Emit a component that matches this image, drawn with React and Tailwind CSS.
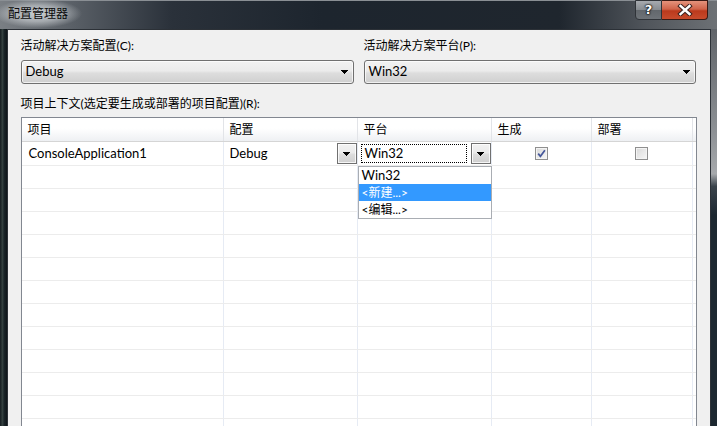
import React from "react";

const COLS = "grid-cols-[202px_134px_134px_100px_101px_1fr]";
const BTN_BG = "bg-[linear-gradient(#f2f2f2,#ebebeb_45%,#dddddd_55%,#cfcfcf)]";

function Arrow() {
    return (
        <svg width="7" height="4" viewBox="0 0 7 4" shapeRendering="crispEdges">
            <path d="M0 0H7V1H6V2H5V3H4V4H3V3H2V2H1V1H0Z" fill="#000" />
        </svg>
    );
}

function Combo({ value }) {
    return (
        <div className={`flex h-[24px] items-center justify-between rounded-[3px] border border-[#707070] ${BTN_BG} pl-[4px] pr-[5px] shadow-[inset_0_0_0_1px_rgba(255,255,255,0.7)]`}>
            <span className="text-[13px]">{value}</span>
            <Arrow />
        </div>
    );
}

function DropButton() {
    return (
        <div className={`flex h-[21px] w-[20px] shrink-0 items-center justify-center border border-[#707070] ${BTN_BG} shadow-[inset_0_0_0_1px_rgba(255,255,255,0.8)]`}>
            <Arrow />
        </div>
    );
}

function Check({ checked }) {
    return (
        <div className="flex h-[13px] w-[13px] items-center justify-center border border-[#8f8f8f] bg-[linear-gradient(135deg,#d9d9d9,#f7f7f7)] shadow-[inset_0_0_0_1px_#f4f4f4]">
            {checked && (
                <svg width="9" height="9" viewBox="0 0 9 9">
                    <path d="M1.2 4.6L3.4 7.3L7.9 1.2" stroke="#45579a" strokeWidth="1.7" fill="none" />
                </svg>
            )}
        </div>
    );
}

function App() {
    const headers = ["项目", "配置", "平台", "生成", "部署"];
    const emptyRows = Array.from({ length: 12 });

    return (
        <div className="flex h-[426px] w-[717px] flex-col overflow-hidden bg-[#1d252d] font-['Lato','Noto_Sans_CJK_SC',sans-serif] text-[12px] text-black">
            {/* Title bar */}
            <div className="flex h-[29px] shrink-0 items-start justify-between border-t border-[#8a8f94] bg-[linear-gradient(90deg,#7a7f84_0%,#5a6067_10%,#2a313a_24%,#1d252e_45%,#1f262e_78%,#50555b_90%,#6d7175_100%)]">
                <div className="ml-[-6px] mt-[-2px] bg-[radial-gradient(closest-side,rgba(225,229,232,0.8),rgba(225,229,232,0.5)_55%,rgba(225,229,232,0)_100%)] px-[14px] pb-[6px] pt-[7px]">
                    <span className="block leading-[16px] text-[#0a0a0a]">配置管理器</span>
                </div>
                <div className="mr-[9px] flex -mt-[1px]">
                    <div className="flex h-[20px] w-[27px] items-center justify-center rounded-bl-[4px] border border-[#2f3338] bg-[linear-gradient(#a7abb0,#868b90_50%,#62676c_51%,#6e7378)] font-['DejaVu_Sans',sans-serif] text-[13px] font-bold text-white [text-shadow:0_0_1px_#000,0_0_2px_#000,0_0_2px_#000]">
                        ?
                    </div>
                    <div className="flex h-[20px] w-[46px] items-center justify-center rounded-br-[4px] border border-l-0 border-[#3a1a14] bg-[linear-gradient(#e4937c,#d0644a_45%,#bb3a1d_55%,#c74b2c)]">
                        <svg width="16" height="12" viewBox="0 0 16 12">
                            <path d="M3.5 2L12.5 10M12.5 2L3.5 10" stroke="#3a2320" strokeWidth="4.4" strokeLinecap="square" fill="none" />
                            <path d="M3.5 2L12.5 10M12.5 2L3.5 10" stroke="#fff" strokeWidth="2.4" strokeLinecap="square" fill="none" />
                        </svg>
                    </div>
                </div>
            </div>

            {/* Body with frame sides */}
            <div className="flex flex-1">
                <div className="w-[7px] bg-[linear-gradient(90deg,#141b1f,#34403f_35%,#1a2428_60%,#0f1519)]" />
                <div className="flex-1 border-l border-t border-r border-[#2c3137] bg-[#f0f0f0] px-[13px] pt-[8px]">
                    <div className="flex gap-[10px]">
                        <div className="w-[333px]">
                            <div className="h-[16px] leading-[16px]">活动解决方案配置(C):</div>
                            <div className="mt-[6px]">
                                <Combo value="Debug" />
                            </div>
                        </div>
                        <div className="w-[332px]">
                            <div className="h-[16px] leading-[16px]">活动解决方案平台(P):</div>
                            <div className="mt-[6px]">
                                <Combo value="Win32" />
                            </div>
                        </div>
                    </div>

                    <div className="mt-[12px] h-[16px] leading-[16px]">项目上下文(选定要生成或部署的项目配置)(R):</div>

                    {/* Project grid */}
                    <div className="relative mt-[5px] w-[676px] border border-[#828790] bg-white">
                        <div className={`grid ${COLS} h-[24px] border-b border-[#d5d5d5] bg-[linear-gradient(#ffffff,#ffffff_45%,#eef0f3)]`}>
                            {headers.map((h) => (
                                <div key={h} className="flex items-center border-r border-[#e2e4e8] pl-[6px]">
                                    {h}
                                </div>
                            ))}
                            <div />
                        </div>

                        {/* First row */}
                        <div className={`grid ${COLS} h-[24px] border-b border-[#ececec] text-[13px]`}>
                            <div className="flex items-center border-r border-[#e6ebf4] pl-[7px]">ConsoleApplication1</div>
                            <div className="flex items-center justify-between border-r border-[#e6ebf4] pl-[6px]">
                                <span>Debug</span>
                                <DropButton />
                            </div>
                            <div className="flex items-center border-r border-[#e6ebf4] pl-[3px]">
                                <div className="flex h-[19px] flex-1 items-center border border-dotted border-black pl-[3px]">Win32</div>
                                <div className="ml-[4px]">
                                    <DropButton />
                                </div>
                            </div>
                            <div className="flex items-center justify-center border-r border-[#e6ebf4]">
                                <Check checked />
                            </div>
                            <div className="flex items-center justify-center border-r border-[#e6ebf4]">
                                <Check />
                            </div>
                            <div />
                        </div>

                        {emptyRows.map((_, i) => (
                            <div key={i} className={`grid ${COLS} h-[23px] border-b border-[#ececec]`}>
                                <div className="border-r border-[#e6ebf4]" />
                                <div className="border-r border-[#e6ebf4]" />
                                <div className="border-r border-[#e6ebf4]" />
                                <div className="border-r border-[#e6ebf4]" />
                                <div className="border-r border-[#e6ebf4]" />
                                <div />
                            </div>
                        ))}

                        {/* Open platform list */}
                        <div className="absolute left-[336px] top-[48px] w-[134px] border border-[#a9adb3] bg-white">
                            <div className="flex h-[17px] items-center pl-[3px] text-[13px]">Win32</div>
                            <div className="flex h-[17px] items-center bg-[#3399ff] pl-[3px] text-white">&lt;新建...&gt;</div>
                            <div className="flex h-[17px] items-center pl-[3px]">&lt;编辑...&gt;</div>
                        </div>
                    </div>
                </div>
                <div className="w-[7px] bg-[linear-gradient(#5f6368,#8d9195_25%,#a6a9ac_35%,#3a434b_38%,#1c2730_45%,#1c2730)]" />
            </div>
        </div>
    );
}

export default App;
